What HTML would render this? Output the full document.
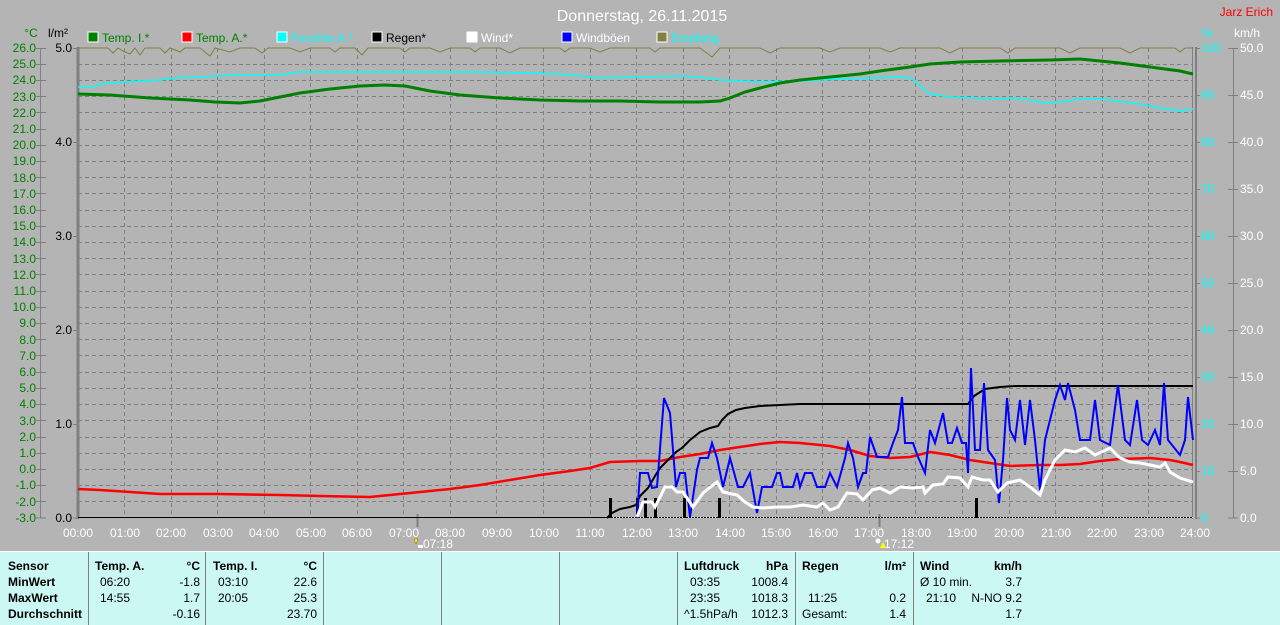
<!DOCTYPE html>
<html><head><meta charset="utf-8"><style>
html,body{margin:0;padding:0;background:#b4b4b4;}
svg{display:block;font-family:"Liberation Sans",sans-serif;}
.p{position:absolute;font-family:"Liberation Sans",sans-serif;font-size:12px;color:#000;}
.b{font-weight:bold;}
</style></head><body>
<div style="position:relative;width:1280px;height:625px;overflow:hidden;background:#b4b4b4">
<svg width="1280" height="552" viewBox="0 0 1280 552" style="position:absolute;left:0;top:0">
<text x="642" y="21" font-size="16" fill="#fff" text-anchor="middle">Donnerstag, 26.11.2015</text>
<text x="1273" y="16" font-size="12" fill="#f00" text-anchor="end">Jarz Erich</text>
<text x="31" y="37" font-size="12" fill="#008000" text-anchor="middle">°C</text>
<text x="58" y="37" font-size="12" fill="#000" text-anchor="middle">l/m²</text>
<text x="1202" y="37" font-size="12" fill="#0ff">%</text>
<text x="1234" y="37" font-size="12" fill="#fff">km/h</text>
<!-- legend -->
<g font-size="12">
<rect x="88" y="32" width="10" height="10" fill="#008000" stroke="#fff"/><text x="102" y="42" fill="#008000">Temp. I.*</text>
<rect x="182" y="32" width="10" height="10" fill="#f00" stroke="#fff"/><text x="196" y="42" fill="#008000">Temp. A.*</text>
<rect x="277" y="32" width="10" height="10" fill="#0ff" stroke="#fff"/><text x="291" y="42" fill="#0ff">Feuchte A.*</text>
<rect x="372" y="32" width="10" height="10" fill="#000" stroke="#fff"/><text x="386" y="42" fill="#000">Regen*</text>
<rect x="467" y="32" width="10" height="10" fill="#fff" stroke="#fff"/><text x="481" y="42" fill="#fff">Wind*</text>
<rect x="562" y="32" width="10" height="10" fill="#00f" stroke="#fff"/><text x="576" y="42" fill="#fff">Windböen</text>
<rect x="657" y="32" width="10" height="10" fill="#808040" stroke="#fff"/><text x="671" y="42" fill="#0ff">Empfang</text>
</g>
<!-- grid -->
<g stroke="#808080" stroke-width="1" stroke-dasharray="4,3">
<path d="M78 64.5H1193M78 80.5H1193M78 96.5H1193M78 112.5H1193M78 129.5H1193M78 145.5H1193M78 161.5H1193M78 177.5H1193M78 193.5H1193M78 210.5H1193M78 226.5H1193M78 242.5H1193M78 258.5H1193M78 274.5H1193M78 291.5H1193M78 307.5H1193M78 323.5H1193M78 339.5H1193M78 355.5H1193M78 372.5H1193M78 388.5H1193M78 404.5H1193M78 420.5H1193M78 437.5H1193M78 453.5H1193M78 469.5H1193M78 485.5H1193M78 501.5H1193"/>
<path d="M124.5 48V518M171.5 48V518M217.5 48V518M264.5 48V518M310.5 48V518M357.5 48V518M403.5 48V518M450.5 48V518M496.5 48V518M543.5 48V518M590.5 48V518M636.5 48V518M683.5 48V518M729.5 48V518M776.5 48V518M822.5 48V518M869.5 48V518M915.5 48V518M962.5 48V518M1009.5 48V518M1055.5 48V518M1102.5 48V518M1148.5 48V518"/>
</g>
<!-- axes -->
<line x1="78" y1="47" x2="78" y2="519" stroke="#808080" stroke-width="3"/>
<line x1="1192.5" y1="47" x2="1192.5" y2="519" stroke="#808080" stroke-width="1"/>
<line x1="1196" y1="47" x2="1196" y2="519" stroke="#808080" stroke-width="2"/>
<line x1="40.5" y1="48" x2="40.5" y2="518" stroke="#808080"/>
<line x1="1233.5" y1="48" x2="1233.5" y2="518" stroke="#808080"/>
<g stroke="#808080">
<path d="M36 48.5H46M36 64.5H46M36 80.5H46M36 96.5H46M36 112.5H46M36 129.5H46M36 145.5H46M36 161.5H46M36 177.5H46M36 193.5H46M36 210.5H46M36 226.5H46M36 242.5H46M36 258.5H46M36 274.5H46M36 291.5H46M36 307.5H46M36 323.5H46M36 339.5H46M36 355.5H46M36 372.5H46M36 388.5H46M36 404.5H46M36 420.5H46M36 437.5H46M36 453.5H46M36 469.5H46M36 485.5H46M36 501.5H46M36 518H46"/>
<path d="M73 48.5H78M73 142.5H78M73 236.5H78M73 330.5H78M73 424.5H78M73 518H78"/>
<path d="M1196 48.5H1200M1196 95.5H1200M1196 142.5H1200M1196 189.5H1200M1196 236.5H1200M1196 283.5H1200M1196 330.5H1200M1196 377.5H1200M1196 424.5H1200M1196 471.5H1200M1196 518H1200"/>
<path d="M1228 48.5H1238M1228 95.5H1238M1228 142.5H1238M1228 189.5H1238M1228 236.5H1238M1228 283.5H1238M1228 330.5H1238M1228 377.5H1238M1228 424.5H1238M1228 471.5H1238M1228 518H1238"/>
</g>
<g font-size="12" fill="#008000" text-anchor="end">
<text x="36" y="52">26.0</text><text x="36" y="68">25.0</text><text x="36" y="84">24.0</text><text x="36" y="101">23.0</text><text x="36" y="117">22.0</text><text x="36" y="133">21.0</text><text x="36" y="149">20.0</text><text x="36" y="165">19.0</text><text x="36" y="182">18.0</text><text x="36" y="198">17.0</text><text x="36" y="214">16.0</text><text x="36" y="230">15.0</text><text x="36" y="246">14.0</text><text x="36" y="263">13.0</text><text x="36" y="279">12.0</text><text x="36" y="295">11.0</text><text x="36" y="311">10.0</text><text x="36" y="327">9.0</text><text x="36" y="344">8.0</text><text x="36" y="360">7.0</text><text x="36" y="376">6.0</text><text x="36" y="392">5.0</text><text x="36" y="408">4.0</text><text x="36" y="425">3.0</text><text x="36" y="441">2.0</text><text x="36" y="457">1.0</text><text x="36" y="473">0.0</text><text x="36" y="489">-1.0</text><text x="36" y="506">-2.0</text><text x="36" y="522">-3.0</text>
</g>
<g font-size="12" fill="#000" text-anchor="end">
<text x="72" y="52">5.0</text><text x="72" y="146">4.0</text><text x="72" y="240">3.0</text><text x="72" y="334">2.0</text><text x="72" y="428">1.0</text><text x="72" y="522">0.0</text>
</g>
<g font-size="12" fill="#0ff">
<text x="1201" y="52">100</text><text x="1201" y="99">90</text><text x="1201" y="146">80</text><text x="1201" y="193">70</text><text x="1201" y="240">60</text><text x="1201" y="287">50</text><text x="1201" y="334">40</text><text x="1201" y="381">30</text><text x="1201" y="428">20</text><text x="1201" y="475">10</text><text x="1201" y="522">0</text>
</g>
<g font-size="12" fill="#fff">
<text x="1240" y="52">50.0</text><text x="1240" y="99">45.0</text><text x="1240" y="146">40.0</text><text x="1240" y="193">35.0</text><text x="1240" y="240">30.0</text><text x="1240" y="287">25.0</text><text x="1240" y="334">20.0</text><text x="1240" y="381">15.0</text><text x="1240" y="428">10.0</text><text x="1240" y="475">5.0</text><text x="1240" y="522">0.0</text>
</g>
<g font-size="12" fill="#fff" text-anchor="middle">
<text x="78" y="537">00:00</text><text x="125" y="537">01:00</text><text x="171" y="537">02:00</text><text x="218" y="537">03:00</text><text x="264" y="537">04:00</text><text x="311" y="537">05:00</text><text x="357" y="537">06:00</text><text x="404" y="537">07:00</text><text x="450" y="537">08:00</text><text x="497" y="537">09:00</text><text x="544" y="537">10:00</text><text x="590" y="537">11:00</text><text x="637" y="537">12:00</text><text x="683" y="537">13:00</text><text x="730" y="537">14:00</text><text x="776" y="537">15:00</text><text x="823" y="537">16:00</text><text x="869" y="537">17:00</text><text x="916" y="537">18:00</text><text x="962" y="537">19:00</text><text x="1009" y="537">20:00</text><text x="1056" y="537">21:00</text><text x="1102" y="537">22:00</text><text x="1149" y="537">23:00</text><text x="1195" y="537">24:00</text>
<text x="438" y="548">07:18</text><text x="899" y="548">17:12</text>
</g>
<line x1="417.5" y1="514" x2="417.5" y2="527" stroke="#808080" stroke-width="2"/>
<line x1="879.5" y1="514" x2="879.5" y2="527" stroke="#808080" stroke-width="2"/>
<path d="M414 539l4 0-2 5z" fill="#ff0" stroke="#806000" stroke-width="0.5"/><rect x="418" y="545" width="5" height="3" fill="#fff"/>
<circle cx="878" cy="541" r="2.5" fill="#fff"/><path d="M880 548l3-6 3 6z" fill="#ff0"/>
<!-- baseline -->
<line x1="78" y1="517.5" x2="1193" y2="517.5" stroke="#000" stroke-width="1"/>
<line x1="607" y1="517.5" x2="1193" y2="517.5" stroke="#fff" stroke-width="1" stroke-dasharray="1,2"/>
<!-- Empfang -->
<polyline fill="none" stroke="#808040" stroke-width="1" points="78,48 108,48 113,53 118,48 125,52 130,54 135,48 140,55 145,48 160,48 165,53 170,48 180,52 185,48 200,48 210,56 215,48 230,52 240,48 255,48 262,53 268,48 290,48 300,52 310,48 330,48 335,52 340,48 355,48 362,55 368,48 400,48 405,52 410,48 430,48 440,52 450,48 470,48 475,52 480,48 500,48 510,53 520,48 560,48 565,52 570,48 590,48 600,52 610,48 650,48 655,52 660,48 700,48 712,57 720,48 760,48 770,53 780,48 820,48 830,52 840,48 880,48 890,52 900,48 940,48 950,53 960,48 1000,48 1008,53 1015,48 1060,48 1070,53 1080,48 1120,48 1130,53 1140,48 1175,48 1180,52 1185,48 1193,48"/>
<!-- Feuchte -->
<polyline fill="none" stroke="#0ff" stroke-width="1.5" points="78,87 92,87 100,84 110,83 125,82 160,80 175,78 200,77 215,76 240,75 280,75 300,72 380,72 430,72 480,72 530,73 560,74 580,76 600,78 640,77 680,76 700,77 720,80 760,82 800,81 840,79 870,78 900,77 911,78 920,86 930,94 950,97 975,98 1000,99 1010,98 1030,100 1045,103 1060,102 1080,99 1100,99 1110,100 1125,102 1140,104 1160,108 1180,111 1193,109"/>
<!-- Temp I -->
<polyline fill="none" stroke="#008000" stroke-width="3" points="78,94 110,95 150,98 190,100 215,102 240,103 260,101 280,97 300,93 330,89 360,86 385,85 405,86 430,91 460,95 500,98 540,100 580,101 620,101 660,102 700,102 720,101 730,98 745,92 760,88 780,83 800,80 830,77 860,74 880,71 910,67 930,64 960,62 1000,61 1050,60 1080,59 1100,61 1120,63 1150,67 1180,71 1193,74"/>
<!-- Temp A -->
<polyline fill="none" stroke="#f00" stroke-width="2.5" points="78,489 100,490 130,492 160,494 220,494 280,495 320,496 370,497 390,495 420,492 450,489 480,485 510,480 540,475 570,471 590,468 610,462 640,461 660,461 680,457 700,454 720,450 740,447 760,444 780,442 800,443 830,446 850,450 870,456 890,458 910,457 930,452 950,455 970,460 990,463 1010,466 1040,465 1060,465 1080,464 1100,461 1120,459 1150,458 1170,460 1180,462 1193,465"/>
<!-- Regen bars -->
<g stroke="#000" stroke-width="3">
<path d="M610.5 498V518M637.5 498V518M645.5 498V518M655.5 498V518M684.5 498V518M719.5 498V518M976.5 498V518"/>
</g>
<!-- Regen cumulative -->
<polyline fill="none" stroke="#000" stroke-width="2" points="607,518 612,513 620,509 630,507 636,505 640,496 648,488 655,476 660,468 668,460 676,452 682,448 690,440 700,432 710,428 718,426 722,420 728,414 736,410 745,408 760,406 780,405 800,404 968,404 974,396 985,389 1000,387 1015,386 1193,386"/>
<!-- Windböen -->
<polyline fill="none" stroke="#00f" stroke-width="2" points="637,518 640,473 648,473 652,488 657,487 664,398 670,413 676,487 680,473 685,473 690,517 697,470 700,458 708,458 712,443 717,458 723,487 730,458 738,487 743,487 750,473 757,513 762,487 772,487 777,473 780,473 783,487 793,487 797,473 800,487 805,473 812,473 817,487 825,487 830,473 837,487 845,458 848,443 853,458 858,487 863,473 866,473 870,437 877,457 888,457 893,443 898,430 902,397 905,443 913,443 918,457 925,473 930,430 935,443 943,413 948,443 952,443 957,428 962,443 966,443 968,473 971,368 975,450 980,450 984,383 988,450 995,460 999,503 1003,460 1007,398 1010,430 1015,440 1020,400 1025,445 1030,400 1035,440 1040,490 1045,440 1050,420 1055,400 1060,385 1065,400 1068,383 1075,410 1080,440 1090,440 1095,400 1100,440 1110,445 1118,385 1125,440 1130,445 1137,400 1142,440 1148,445 1155,430 1160,445 1164,383 1168,440 1180,455 1185,440 1188,397 1193,440"/>
<!-- Wind -->
<polyline fill="none" stroke="#fff" stroke-width="3" points="637,517 643,502 652,502 655,507 665,487 672,487 677,492 683,492 693,507 703,493 717,482 723,492 737,495 745,502 753,507 763,508 777,507 790,507 803,505 817,507 823,503 830,510 838,507 847,493 857,494 863,500 872,490 880,488 890,493 900,487 913,488 923,487 925,493 933,485 943,484 948,477 960,478 968,487 972,477 983,480 990,480 998,492 1007,483 1020,480 1030,487 1040,495 1045,480 1055,460 1065,450 1075,452 1085,448 1095,455 1110,448 1120,458 1130,462 1140,463 1150,465 1160,467 1165,463 1170,472 1180,478 1193,482"/>
</svg>
<!-- bottom panel -->
<div style="position:absolute;left:0;top:551px;width:1280px;height:1px;background:#fff"></div>
<div style="position:absolute;left:0;top:552px;width:1280px;height:73px;background:#ccf8f4"></div>
<div style="position:absolute;top:552px;left:88px;width:1px;height:73px;background:#808080"></div>
<div style="position:absolute;top:552px;left:205px;width:1px;height:73px;background:#808080"></div>
<div style="position:absolute;top:552px;left:323px;width:1px;height:73px;background:#808080"></div>
<div style="position:absolute;top:552px;left:441px;width:1px;height:73px;background:#808080"></div>
<div style="position:absolute;top:552px;left:559px;width:1px;height:73px;background:#808080"></div>
<div style="position:absolute;top:552px;left:677px;width:1px;height:73px;background:#808080"></div>
<div style="position:absolute;top:552px;left:795px;width:1px;height:73px;background:#808080"></div>
<div style="position:absolute;top:552px;left:913px;width:1px;height:73px;background:#808080"></div>
<div class="p b" style="left:8px;top:559px">Sensor</div>
<div class="p b" style="left:8px;top:575px">MinWert</div>
<div class="p b" style="left:8px;top:591px">MaxWert</div>
<div class="p b" style="left:8px;top:607px">Durchschnitt</div>
<div class="p b" style="left:95px;top:559px">Temp. A.</div>
<div class="p b" style="left:180px;top:559px;width:20px;text-align:right">°C</div>
<div class="p" style="left:100px;top:575px">06:20</div><div class="p" style="left:160px;top:575px;width:40px;text-align:right">-1.8</div>
<div class="p" style="left:100px;top:591px">14:55</div><div class="p" style="left:160px;top:591px;width:40px;text-align:right">1.7</div>
<div class="p" style="left:160px;top:607px;width:40px;text-align:right">-0.16</div>
<div class="p b" style="left:213px;top:559px">Temp. I.</div>
<div class="p b" style="left:297px;top:559px;width:20px;text-align:right">°C</div>
<div class="p" style="left:218px;top:575px">03:10</div><div class="p" style="left:277px;top:575px;width:40px;text-align:right">22.6</div>
<div class="p" style="left:218px;top:591px">20:05</div><div class="p" style="left:277px;top:591px;width:40px;text-align:right">25.3</div>
<div class="p" style="left:277px;top:607px;width:40px;text-align:right">23.70</div>
<div class="p b" style="left:684px;top:559px">Luftdruck</div><div class="p b" style="left:740px;top:559px;width:48px;text-align:right">hPa</div>
<div class="p" style="left:690px;top:575px">03:35</div><div class="p" style="left:740px;top:575px;width:48px;text-align:right">1008.4</div>
<div class="p" style="left:690px;top:591px">23:35</div><div class="p" style="left:740px;top:591px;width:48px;text-align:right">1018.3</div>
<div class="p" style="left:684px;top:607px">^1.5hPa/h</div><div class="p" style="left:740px;top:607px;width:48px;text-align:right">1012.3</div>
<div class="p b" style="left:802px;top:559px">Regen</div><div class="p b" style="left:866px;top:559px;width:40px;text-align:right">l/m²</div>
<div class="p" style="left:808px;top:591px">11:25</div><div class="p" style="left:866px;top:591px;width:40px;text-align:right">0.2</div>
<div class="p" style="left:802px;top:607px">Gesamt:</div><div class="p" style="left:866px;top:607px;width:40px;text-align:right">1.4</div>
<div class="p b" style="left:920px;top:559px">Wind</div><div class="p b" style="left:970px;top:559px;width:52px;text-align:right">km/h</div>
<div class="p" style="left:920px;top:575px">Ø 10 min.</div><div class="p" style="left:970px;top:575px;width:52px;text-align:right">3.7</div>
<div class="p" style="left:926px;top:591px">21:10</div><div class="p" style="left:960px;top:591px;width:62px;text-align:right">N-NO 9.2</div>
<div class="p" style="left:970px;top:607px;width:52px;text-align:right">1.7</div>
</div>
</body></html>
